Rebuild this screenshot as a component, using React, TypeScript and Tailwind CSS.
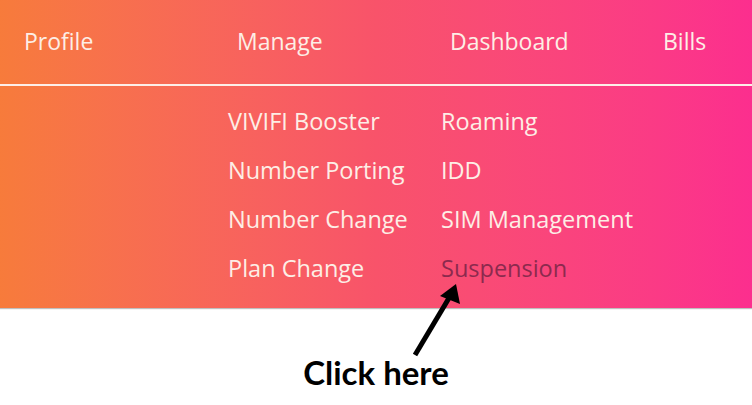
const navItems = ["Profile", "Manage", "Dashboard", "Bills"];

const leftLinks = ["VIVIFI Booster", "Number Porting", "Number Change", "Plan Change"];
const rightLinks = ["Roaming", "IDD", "SIM Management", "Suspension"];

export default function App() {
  return (
    <div className="relative w-[752px] h-[405px] bg-white overflow-hidden font-['Open_Sans',sans-serif]">
      {/* menu band */}
      <div className="h-[308px] bg-gradient-to-r from-[#f77b3b] via-[#f8536a] to-[#fc2e8e] shadow-[0_1px_1px_rgba(0,0,0,0.25)]">
        <nav className="flex h-[86px] items-center pl-[24px] pb-[2px] border-b-2 border-[#fdeee8]">
          {navItems.map((item) => (
            <a key={item} className="w-[213px] shrink-0 text-[23px] text-[#fdeee6] cursor-pointer">
              {item}
            </a>
          ))}
        </nav>

        <div className="flex pl-[228px] pt-[11px]">
          <ul className="w-[213px] shrink-0">
            {leftLinks.map((link) => (
              <li key={link} className="h-[49px] flex items-center text-[23.5px] text-[#fdeee6]">
                {link}
              </li>
            ))}
          </ul>
          <ul>
            {rightLinks.map((link) => (
              <li
                key={link}
                className={`h-[49px] flex items-center text-[23.5px] ${
                  link === "Suspension" ? "text-[#8c2a4e]" : "text-[#fdeee6]"
                }`}
              >
                {link}
              </li>
            ))}
          </ul>
        </div>
      </div>

      {/* annotation */}
      <svg className="absolute left-0 top-0" width="752" height="405">
        <line x1="415" y1="355" x2="452" y2="293" stroke="#000" strokeWidth="5" />
        <polygon points="456,284 440,296 460,304" fill="#000" />
      </svg>
      <div className="flex justify-center pt-[48px]">
        <span className="text-[33px] font-bold text-black font-['Lato',sans-serif] leading-none">
          Click here
        </span>
      </div>
    </div>
  );
}
